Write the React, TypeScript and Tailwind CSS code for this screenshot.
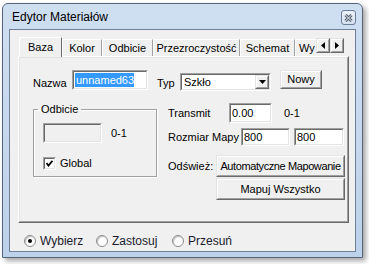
import React from "react";

const sunkenOuter = "border border-t-[#a0a0a0] border-l-[#a0a0a0] border-b-white border-r-white";
const sunkenInner = "h-full border border-t-[#696969] border-l-[#696969] border-b-[#e3e3e3] border-r-[#e3e3e3]";
const raisedOuter = "border border-t-[#e3e3e3] border-l-[#e3e3e3] border-b-[#696969] border-r-[#696969] bg-[#f0f0f0]";
const raisedInner = "h-full border border-t-white border-l-white border-b-[#a0a0a0] border-r-[#a0a0a0] flex items-center justify-center whitespace-nowrap";

const TextBox: React.FC<{ className: string; disabled?: boolean; children?: React.ReactNode }> = ({ className, disabled, children }) => (
  <div className={`${className} ${sunkenOuter}`}>
    <div className={`${sunkenInner} ${disabled ? "bg-[#f0f0f0]" : "bg-white"} flex items-center pl-[1px]`}>{children}</div>
  </div>
);

const Btn: React.FC<{ className: string; children: React.ReactNode }> = ({ className, children }) => (
  <div className={`${className} ${raisedOuter}`}>
    <div className={raisedInner}>{children}</div>
  </div>
);

const Radio: React.FC<{ checked?: boolean; label: string; className: string }> = ({ checked, label, className }) => (
  <div className={`${className} flex items-center gap-[4px]`}>
    <div className="w-[12px] h-[12px] rounded-full border border-[#8a8a8a] bg-white shadow-[inset_1px_1px_1px_rgba(0,0,0,0.25)] flex items-center justify-center">
      {checked && <div className="w-[4px] h-[4px] rounded-full bg-black" />}
    </div>
    <span className="text-[12px] leading-[14px] text-[#1b1b2e]">{label}</span>
  </div>
);

const tabs = ["Kolor", "Odbicie", "Przezroczystość", "Schemat", "Wy"];
const tabWidths = ["w-[40px]", "w-[51px]", "w-[87px]", "w-[55px]", "w-[40px]"];

export default function App() {
  return (
    <div className="w-[369px] h-[264px] bg-white overflow-hidden font-['Liberation_Sans',Arial,sans-serif] text-black">
      <div className="ml-[2px] mt-[3px] w-[361px] h-[255px] flex flex-col border border-[#56647a] rounded-t-[6px] bg-gradient-to-b from-[#cfdff2] to-[#bcd1ea] shadow-[3px_3px_5px_rgba(0,0,0,0.35)]">
        {/* title bar */}
        <div className="h-[25px] flex items-center justify-between pl-[9px] pr-[6px]">
          <span className="text-[12px] leading-[14px]">Edytor Materiałów</span>
          <div className="self-start mt-[6px] w-[15px] h-[15px] rounded-[3px] border border-[#6d7e99] bg-gradient-to-b from-[#eef3fa] to-[#d3e0f0] flex items-center justify-center">
            <svg width="9" height="8" viewBox="0 0 9 8">
              <path d="M1.5 1 L7.5 7 M7.5 1 L1.5 7" stroke="#55606e" strokeWidth="3" />
              <path d="M1.5 1 L7.5 7 M7.5 1 L1.5 7" stroke="#f4f6f9" strokeWidth="1" />
            </svg>
          </div>
        </div>

        {/* client area */}
        <div className="mx-[6px] h-[223px] border border-[#6f7f96] bg-[#f0f0f0] pt-[7px] pl-[8px] text-[11px] leading-[13px]">
          <div className="w-[331px]">
            {/* tab strip */}
            <div className="relative z-10 h-[20px] -mb-px flex">
              <div className="w-[298px] h-[20px] overflow-hidden flex items-start pl-[1px]">
                <div className="shrink-0 w-[43px] h-[20px] bg-[#f0f0f0] border-t border-l border-r border-t-white border-l-white border-r-[#696969] flex items-center justify-center">
                  Baza
                </div>
                {tabs.map((t, i) => (
                  <div
                    key={t}
                    className={`shrink-0 ${tabWidths[i]} mt-[2px] h-[17px] border-t border-l border-r border-t-white border-l-white border-r-[#a0a0a0] flex items-center whitespace-nowrap ${t === "Wy" ? "justify-start pl-[3px]" : "justify-center"}`}
                  >
                    {t}
                  </div>
                ))}
              </div>
              <div className="mt-[1px] flex">
                <Btn className="w-[14px] h-[15px]">
                  <svg width="4" height="7" viewBox="0 0 4 7"><path d="M4 0 L0 3.5 L4 7 Z" fill="#000" /></svg>
                </Btn>
                <Btn className="w-[14px] h-[15px]">
                  <svg width="4" height="7" viewBox="0 0 4 7"><path d="M0 0 L4 3.5 L0 7 Z" fill="#000" /></svg>
                </Btn>
              </div>
            </div>

            {/* tab panel */}
            <div className="h-[167px] border border-t-white border-l-white border-b-[#696969] border-r-[#696969]">
              <div className="h-full border border-t-[#e3e3e3] border-l-[#e3e3e3] border-b-[#a0a0a0] border-r-[#a0a0a0] pt-[12px] pl-[13px]">
                {/* row 1 */}
                <div className="flex items-start">
                  <span className="w-[39px] mt-[7px]">Nazwa</span>
                  <TextBox className="w-[76px] h-[20px]">
                    <span className="bg-[#3399ff] text-white leading-[14px] pl-[1px]">unnamed63</span>
                  </TextBox>
                  <span className="ml-[9px] w-[23px] mt-[7px]">Typ</span>
                  <div className={`mt-[3px] w-[91px] h-[18px] ${sunkenOuter}`}>
                    <div className={`${sunkenInner} bg-white flex items-center justify-between`}>
                      <span className="pl-[2px]">Szkło</span>
                      <Btn className="w-[14px] h-full">
                        <svg width="7" height="4" viewBox="0 0 7 4"><path d="M0 0 L7 0 L3.5 4 Z" fill="#000" /></svg>
                      </Btn>
                    </div>
                  </div>
                  <Btn className="ml-[9px] w-[42px] h-[19px]">Nowy</Btn>
                </div>

                {/* row 2 */}
                <div className="mt-[12px] flex items-start">
                  <fieldset className="w-[124px] h-[74px] border border-[#a0a0a0] shadow-[inset_1px_1px_0_white,1px_1px_0_white]">
                    <legend className="ml-[4px] px-[3px] leading-[13px]">Odbicie</legend>
                    <div className="mt-[7px] pl-[9px] flex items-center">
                      <TextBox className="w-[59px] h-[20px]" disabled />
                      <span className="ml-[9px]">0-1</span>
                    </div>
                    <div className="mt-[14px] pl-[9px] flex items-center gap-[4px]">
                      <div className={`w-[13px] h-[13px] ${sunkenOuter}`}>
                        <div className={`${sunkenInner} bg-white flex items-center justify-center`}>
                          <svg width="7" height="7" viewBox="0 0 7 7">
                            <path d="M0.5 3 L2.5 5.5 L6.5 0.8" stroke="#000" strokeWidth="1.8" fill="none" />
                          </svg>
                        </div>
                      </div>
                      <span>Global</span>
                    </div>
                  </fieldset>

                  <div className="ml-[11px] flex flex-col">
                    <div className="flex items-center">
                      <span className="w-[61px]">Transmit</span>
                      <TextBox className="w-[43px] h-[20px]">0.00</TextBox>
                      <span className="ml-[12px]">0-1</span>
                    </div>
                    <div className="mt-[5px] flex items-center">
                      <span className="w-[73px]">Rozmiar Mapy</span>
                      <TextBox className="w-[49px] h-[18px]">800</TextBox>
                      <TextBox className="ml-[4px] w-[50px] h-[18px]">800</TextBox>
                    </div>
                    <div className="mt-[9px] flex items-start">
                      <span className="w-[48px] leading-[22px]">Odśwież:</span>
                      <div className="flex flex-col">
                        <Btn className="w-[129px] h-[22px] tracking-[-0.4px]">Automatyczne Mapowanie</Btn>
                        <Btn className="mt-[1px] w-[129px] h-[22px]">Mapuj Wszystko</Btn>
                      </div>
                    </div>
                  </div>
                </div>
              </div>
            </div>
          </div>

          {/* radio row */}
          <div className="mt-[11px] ml-[6px] flex items-center">
            <Radio className="w-[72px]" checked label="Wybierz" />
            <Radio className="w-[76px]" label="Zastosuj" />
            <Radio className="w-[80px]" label="Przesuń" />
          </div>
        </div>
      </div>
    </div>
  );
}
